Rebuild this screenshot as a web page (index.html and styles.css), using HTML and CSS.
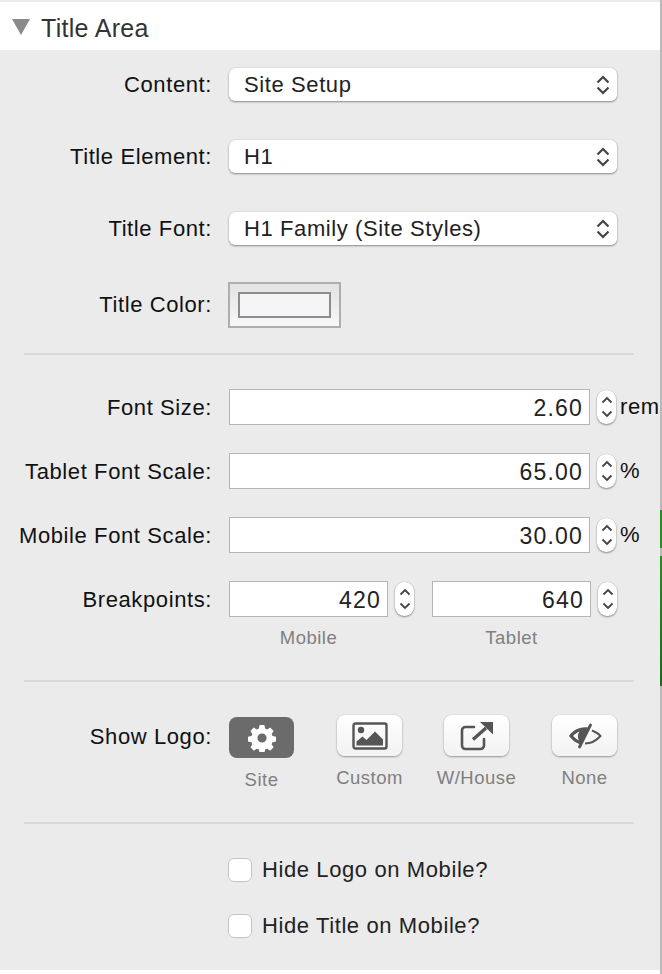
FILE: index.html
```html
<!DOCTYPE html>
<html>
<head>
    <meta charset="UTF-8">
    <link rel="stylesheet" href="styles.css">
</head>
<body>
    <div class="panel">
        <!-- Header -->
        <div class="panel-header">
            <span class="triangle"></span>
            <span class="panel-title">Title Area</span>
        </div>

        <div class="panel-body">
            <!-- Selects -->
            <div class="row row-select">
                <label class="row-label">Content:</label>
                <div class="select-box">
                    <span>Site Setup</span>
                    <svg class="select-arrows" width="14" height="22" viewBox="0 0 14 22"><path d="M1.500 8.500 L7 3 L12.500 8.500 M1.500 13.500 L7 19 L12.500 13.500"/></svg>
                </div>
            </div>
            <div class="row row-select">
                <label class="row-label">Title Element:</label>
                <div class="select-box">
                    <span>H1</span>
                    <svg class="select-arrows" width="14" height="22" viewBox="0 0 14 22"><path d="M1.500 8.500 L7 3 L12.500 8.500 M1.500 13.500 L7 19 L12.500 13.500"/></svg>
                </div>
            </div>
            <div class="row row-select">
                <label class="row-label">Title Font:</label>
                <div class="select-box">
                    <span>H1 Family (Site Styles)</span>
                    <svg class="select-arrows" width="14" height="22" viewBox="0 0 14 22"><path d="M1.500 8.500 L7 3 L12.500 8.500 M1.500 13.500 L7 19 L12.500 13.500"/></svg>
                </div>
            </div>
            <div class="row row-color">
                <label class="row-label">Title Color:</label>
                <div class="color-well"><div class="color-swatch"></div></div>
            </div>

            <hr class="divider divider-first">

            <!-- Numbers -->
            <div class="row row-number">
                <label class="row-label">Font Size:</label>
                <div class="number-input wide">2.60</div>
                <div class="stepper"><svg width="12" height="28" viewBox="0 0 12 28"><path d="M1.500 9.500 L6 5 L10.500 9.500 M1.500 18.500 L6 23 L10.500 18.500"/></svg></div>
                <span class="unit">rem</span>
            </div>
            <div class="row row-number">
                <label class="row-label">Tablet Font Scale:</label>
                <div class="number-input wide">65.00</div>
                <div class="stepper"><svg width="12" height="28" viewBox="0 0 12 28"><path d="M1.500 9.500 L6 5 L10.500 9.500 M1.500 18.500 L6 23 L10.500 18.500"/></svg></div>
                <span class="unit">%</span>
            </div>
            <div class="row row-number">
                <label class="row-label">Mobile Font Scale:</label>
                <div class="number-input wide">30.00</div>
                <div class="stepper"><svg width="12" height="28" viewBox="0 0 12 28"><path d="M1.500 9.500 L6 5 L10.500 9.500 M1.500 18.500 L6 23 L10.500 18.500"/></svg></div>
                <span class="unit">%</span>
            </div>
            <div class="row row-number row-breakpoints">
                <label class="row-label">Breakpoints:</label>
                <div class="number-input narrow">420</div>
                <div class="stepper"><svg width="12" height="28" viewBox="0 0 12 28"><path d="M1.500 9.500 L6 5 L10.500 9.500 M1.500 18.500 L6 23 L10.500 18.500"/></svg></div>
                <div class="number-input narrow second">640</div>
                <div class="stepper"><svg width="12" height="28" viewBox="0 0 12 28"><path d="M1.500 9.500 L6 5 L10.500 9.500 M1.500 18.500 L6 23 L10.500 18.500"/></svg></div>
            </div>
            <div class="captions">
                <span class="caption">Mobile</span>
                <span class="caption">Tablet</span>
            </div>

            <hr class="divider divider-second">

            <!-- Logo -->
            <div class="row row-logo">
                <label class="row-label">Show Logo:</label>
                <div class="logo-options">
                    <div class="logo-option logo-site">
                        <div class="logo-btn active">
                            <svg width="28" height="28" viewBox="0 0 28 28"><path fill="#fff" fill-rule="evenodd" d="M11.600 1h4.800l.7 3.600 2.100.9 3-2 3.400 3.400-2 3 .9 2.100 3.600.7v4.800l-3.600.7-.9 2.100 2 3-3.400 3.400-3-2-2.100.9-.7 3.600h-4.800l-.7-3.600-2.100-.9-3 2-3.400-3.400 2-3-.9-2.100-3.600-.7v-4.800l3.600-.7.9-2.100-2-3 3.400-3.400 3 2 2.100-.9z M14 9.400a4.600 4.600 0 1 0 0 9.200a4.600 4.600 0 1 0 0-9.200z"/></svg>
                        </div>
                        <span class="caption">Site</span>
                    </div>
                    <div class="logo-option logo-custom">
                        <div class="logo-btn">
                            <svg width="36" height="28" viewBox="0 0 36 28"><rect x="1.500" y="1.500" width="33" height="25" rx="2" fill="none" stroke="#555" stroke-width="2.400"/><circle cx="9" cy="8" r="3.200" fill="#555"/><path fill="#555" d="M4.500 23.500v-4l6-5 4 3.500 8.500-8.500 8 8v6z"/></svg>
                        </div>
                        <span class="caption">Custom</span>
                    </div>
                    <div class="logo-option logo-house">
                        <div class="logo-btn">
                            <svg width="34" height="30" viewBox="0 0 34 30"><path fill="none" stroke="#555" stroke-width="2.600" stroke-linecap="round" d="M14 6H5.500a3.500 3.500 0 0 0-3.500 3.500v15a3.500 3.500 0 0 0 3.500 3.500h15a3.500 3.500 0 0 0 3.500-3.500V18"/><path fill="none" stroke="#555" stroke-width="3.400" d="M13 18.500L26 7"/><path fill="#555" d="M20 1H33V13.500z"/></svg>
                        </div>
                        <span class="caption">W/House</span>
                    </div>
                    <div class="logo-option logo-none">
                        <div class="logo-btn">
                            <svg width="34" height="26" viewBox="0 0 34 26"><path fill="#555" fill-rule="evenodd" d="M1 13C5 7.500 11 3.500 20 4.500L12.500 21.500C8 20 4 17 1 13z M5 13C7 15 9 16.500 11 17.500C9.500 14.500 9.500 11 11.500 8.500C9 9.500 7 11 5 13z"/><path fill="none" stroke="#555" stroke-width="2" d="M24 7.500C27.500 9 30.500 10.500 32.500 13C28 18 23 20.500 17 20.500"/><path fill="none" stroke="#555" stroke-width="2.800" stroke-linecap="round" d="M22.500 2L11.500 24"/></svg>
                        </div>
                        <span class="caption">None</span>
                    </div>
                </div>
            </div>

            <hr class="divider divider-third">

            <!-- Checkboxes -->
            <div class="check-row">
                <span class="checkbox"></span>
                <label>Hide Logo on Mobile?</label>
            </div>
            <div class="check-row">
                <span class="checkbox"></span>
                <label>Hide Title on Mobile?</label>
            </div>
        </div>
    </div>

    <!-- Window edge -->
    <div class="edge">
        <div class="edge-green first"></div>
        <div class="edge-green second"></div>
    </div>
</body>
</html>
```

FILE: styles.css
```css
/* Base */
html, body {
    margin: 0;
    padding: 0;
}

body {
    width: 662px;
    height: 974px;
    overflow: hidden;
    position: relative;
    font-family: "Liberation Sans", Arial, sans-serif;
    font-size: 22px;
    letter-spacing: 0.6px;
    color: #111;
    background-color: #fff;
}

/* Panel */
.panel {
    width: 660px;
    height: 970px;
    box-sizing: border-box;
    padding-top: 2px;
    background-color: #ebebeb;
}

.panel-header {
    display: flex;
    align-items: center;
    height: 48px;
    box-sizing: border-box;
    padding: 4px 0 0 12px;
    background-color: #fff;
}

.triangle {
    width: 0;
    height: 0;
    margin-top: -2px;
    border-left: 9px solid transparent;
    border-right: 9px solid transparent;
    border-top: 16px solid #8a8a8a;
}

.panel-title {
    margin-left: 11px;
    font-size: 25px;
    letter-spacing: 0.3px;
    color: #333;
}

.panel-body {
    padding-top: 18px;
}

/* Rows */
.row {
    display: flex;
    align-items: center;
}

.row-label {
    width: 212px;
    margin-right: 17px;
    flex-shrink: 0;
    text-align: right;
    white-space: nowrap;
    color: #111;
}

.row-select {
    height: 33px;
    margin-bottom: 39px;
}

.row-color {
    height: 46px;
    margin-top: -2px;
}

/* Select */
.select-box {
    display: flex;
    align-items: center;
    justify-content: space-between;
    width: 388px;
    height: 33px;
    box-sizing: border-box;
    padding: 0 7px 0 15px;
    background-color: #fff;
    border-radius: 6px;
    box-shadow: 0 1px 2px rgba(0, 0, 0, 0.4), 0 0 1px rgba(0, 0, 0, 0.25);
    color: #222;
}

.select-arrows path {
    fill: none;
    stroke: #444;
    stroke-width: 2.200;
}

/* Color */
.color-well {
    display: flex;
    align-items: center;
    justify-content: center;
    width: 113px;
    height: 46px;
    margin-left: -1px;
    box-sizing: border-box;
    border: 2px solid #aeaeae;
    background: linear-gradient(#e3e3e3, #f7f7f7);
}

.color-swatch {
    width: 93px;
    height: 26px;
    box-sizing: border-box;
    background-color: #f5f5f7;
    border: 2px solid #8c8c8c;
}

/* Dividers */
.divider {
    height: 2px;
    margin: 0 0 0 24px;
    width: 610px;
    border: none;
    background-color: #d9d9d9;
}

.divider-first {
    margin-top: 25px;
    margin-bottom: 34px;
}

.divider-second {
    margin-top: 32px;
    margin-bottom: 33px;
}

.divider-third {
    margin-top: 33px;
    margin-bottom: 34px;
}

/* Number fields */
.row-number {
    height: 36px;
    margin-bottom: 28px;
}

.row-number .row-label {
    padding-top: 2px;
}

.number-input {
    height: 36px;
    box-sizing: border-box;
    padding-right: 6px;
    line-height: 37px;
    font-size: 23px;
    letter-spacing: 1.200px;
    text-align: right;
    background-color: #fff;
    border: 1px solid #b5b5b5;
    color: #222;
}

.number-input.wide {
    width: 361px;
}

.number-input.narrow {
    width: 159px;
}

.number-input.second {
    margin-left: 18px;
}

.stepper {
    display: flex;
    align-items: center;
    justify-content: center;
    width: 19px;
    height: 34px;
    margin-left: 7px;
    background-color: #fff;
    border-radius: 9px;
    box-shadow: 0 1px 2px rgba(0, 0, 0, 0.4), 0 0 1px rgba(0, 0, 0, 0.25);
}

.stepper path {
    fill: none;
    stroke: #444;
    stroke-width: 1.800;
}

.unit {
    margin-left: 4px;
    white-space: nowrap;
}

.row-breakpoints {
    margin-bottom: 11px;
}

/* Captions */
.caption {
    font-size: 18.500px;
    letter-spacing: 0.5px;
    color: #7f7f7f;
    text-align: center;
    white-space: nowrap;
}

.captions {
    display: flex;
    margin-left: 229px;
    height: 20px;
    line-height: 20px;
}

.captions .caption {
    width: 159px;
}

.captions .caption + .caption {
    margin-left: 44px;
}

/* Logo options */
.row-logo {
    align-items: flex-start;
    height: 74px;
}

.row-logo .row-label {
    margin-top: 9px;
}

.logo-options {
    display: flex;
}

.logo-option {
    display: flex;
    flex-direction: column;
    align-items: center;
    width: 65px;
}

.logo-custom {
    margin-left: 43px;
}

.logo-house {
    margin-left: 42px;
}

.logo-none {
    margin-left: 43px;
}

.logo-btn {
    display: flex;
    align-items: center;
    justify-content: center;
    width: 65px;
    height: 41px;
    box-sizing: border-box;
    border-radius: 8px;
    background: linear-gradient(#fff, #f2f2f2);
    box-shadow: 0 1px 2px rgba(0, 0, 0, 0.35), 0 0 1px rgba(0, 0, 0, 0.25);
}

.logo-btn.active {
    margin-top: 2px;
    background-color: #6b6b6b;
    background-image: none;
    box-shadow: none;
}

.logo-option .caption {
    margin-top: 12px;
    line-height: 20px;
}

/* Checkboxes */
.check-row {
    display: flex;
    align-items: center;
    height: 24px;
    margin-left: 228px;
    margin-bottom: 32px;
    color: #222;
}

.checkbox {
    width: 24px;
    height: 24px;
    margin-right: 10px;
    box-sizing: border-box;
    background-color: #fff;
    border-radius: 6px;
    border: 1px solid #c4c4c4;
}

/* Right edge */
.edge {
    position: absolute;
    top: 0;
    right: 0;
    width: 2px;
    height: 974px;
    background-color: #b9b9b9;
}

.edge-green {
    position: absolute;
    left: 0;
    width: 2px;
    background-color: #2a8a25;
}

.edge-green.first {
    top: 510px;
    height: 38px;
}

.edge-green.second {
    top: 556px;
    height: 130px;
    background: linear-gradient(#2a8a25, #1c6a1a);
}
```
